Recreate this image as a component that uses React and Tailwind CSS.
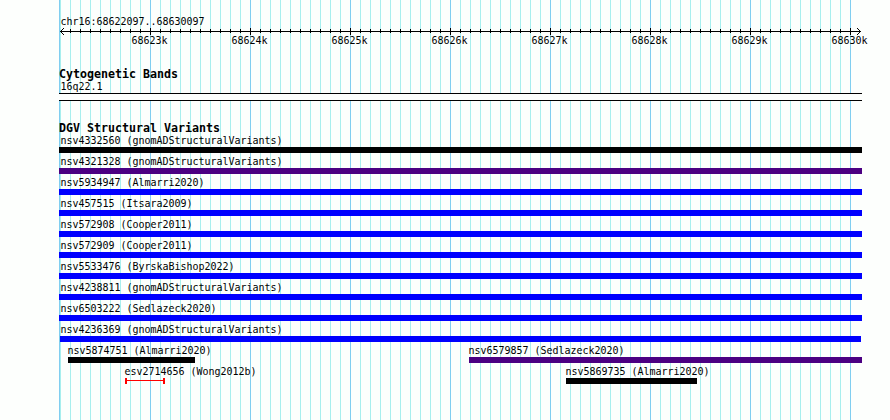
const BLACK = "bg-black";
const INDIGO = "bg-[#4b0082]";
const BLUE = "bg-[#0000ff]";

const full = (name, color) => [{ name, color, gap: 59, width: 803, shift: 1 }];

// Each row holds one or more features; `gap` is the space before the feature.
const rows = [
  full("nsv4332560 (gnomADStructuralVariants)", BLACK),
  full("nsv4321328 (gnomADStructuralVariants)", INDIGO),
  full("nsv5934947 (Almarri2020)", BLUE),
  full("nsv457515 (Itsara2009)", BLUE),
  full("nsv572908 (Cooper2011)", BLUE),
  full("nsv572909 (Cooper2011)", BLUE),
  full("nsv5533476 (ByrskaBishop2022)", BLUE),
  full("nsv4238811 (gnomADStructuralVariants)", BLUE),
  full("nsv6503222 (Sedlazeck2020)", BLUE),
  [{ name: "nsv4236369 (gnomADStructuralVariants)", color: BLUE, gap: 60, width: 801, shift: 0 }],
  [
    { name: "nsv5874751 (Almarri2020)", color: BLACK, gap: 68, width: 127, shift: -1 },
    { name: "nsv6579857 (Sedlazeck2020)", color: INDIGO, gap: 274, width: 393, shift: -1 },
  ],
  [
    { name: "esv2714656 (Wong2012b)", range: true, gap: 125, width: 40, shift: -1 },
    { name: "nsv5869735 (Almarri2020)", color: BLACK, gap: 401, width: 131, shift: -1 },
  ],
];

const ticks = Array.from({ length: 79 }, (_, i) => 70 + i * 10);
const isMajor = (x) => x % 100 === 50;

function GridLines() {
  return (
    <svg className="absolute inset-0" width="890" height="420" shapeRendering="crispEdges">
      <rect x="59" y="0" width="1" height="420" fill="#80cef0" />
      <rect x="60" y="0" width="1" height="420" fill="#a8efee" />
      {ticks.map((x) => (
        <rect key={x} x={x} y="0" width="1" height="420" fill={isMajor(x) ? "#80cef0" : "#a8efee"} />
      ))}
    </svg>
  );
}

function Axis() {
  return (
    <svg className="block" width="890" height="7" shapeRendering="crispEdges">
      <rect x="60" y="3" width="801" height="1" />
      {ticks.map((x) => (
        <rect key={x} x={x} y={isMajor(x) ? 0 : 1} width="1" height={isMajor(x) ? 7 : 4} />
      ))}
      {[1, 2, 3].map((d) => (
        <g key={d}>
          <rect x={60 + d} y={3 - d} width="1" height="1" />
          <rect x={60 + d} y={3 + d} width="1" height="1" />
          <rect x={860 - d} y={3 - d} width="1" height="1" />
          <rect x={860 - d} y={3 + d} width="1" height="1" />
        </g>
      ))}
    </svg>
  );
}

function Label({ children, shift = 0 }) {
  return (
    <div
      className="h-[14px] w-max origin-center translate-x-[0.5px] translate-y-[0.6px] scale-y-110 text-[10px] leading-[14px] tracking-[-0.02px] whitespace-pre"
      style={{ marginLeft: shift }}
    >
      {children}
    </div>
  );
}

function Heading({ children }) {
  return (
    <div className="ml-[59px] h-[14px] w-max text-[11.63px] leading-[14px] font-bold whitespace-pre">
      {children}
    </div>
  );
}

function Feature({ item }) {
  return (
    <div className="shrink-0" style={{ marginLeft: item.gap, width: item.width }}>
      <Label shift={item.shift}>{item.name}</Label>
      {item.range ? (
        <div className="flex h-[6px]">
          <div className="w-[2px] bg-[#ff0000]" />
          <div className="mt-[2px] h-px flex-1 bg-[#ff0000]" />
          <div className="w-[2px] bg-[#ff0000]" />
        </div>
      ) : (
        <div className={`h-[6px] ${item.color}`} />
      )}
    </div>
  );
}

export default function App() {
  return (
    <div className="relative h-[420px] w-[890px] overflow-hidden bg-[#fdfffd] font-['DejaVu_Sans_Mono',monospace] text-black">
      <GridLines />
      <div className="relative flex flex-col">
        <div className="mt-[14px] ml-[60px]">
          <Label>chr16:68622097..68630097</Label>
        </div>
        <Axis />
        <div className="-mt-[2px] ml-[131px] flex">
          {[3, 4, 5, 6, 7, 8, 9, 10].map((n) => (
            <div key={n} className="w-[100px] shrink-0">
              <Label>{`${68620 + n}k`}</Label>
            </div>
          ))}
        </div>
        <div className="mt-[20px]">
          <Heading>Cytogenetic Bands</Heading>
          <div className="-mt-[2px] ml-[60px]">
            <Label>16q22.1</Label>
          </div>
          <div className="ml-[59px] h-[8px] w-[803px] border-y border-black bg-[#fdfffd]" />
        </div>
        <div className="mt-[20px]">
          <Heading>DGV Structural Variants</Heading>
          <div className="-mt-[2px] flex flex-col gap-px">
            {rows.map((row) => (
              <div key={row[0].name} className="flex h-[20px]">
                {row.map((item) => (
                  <Feature key={item.name} item={item} />
                ))}
              </div>
            ))}
          </div>
        </div>
      </div>
    </div>
  );
}
